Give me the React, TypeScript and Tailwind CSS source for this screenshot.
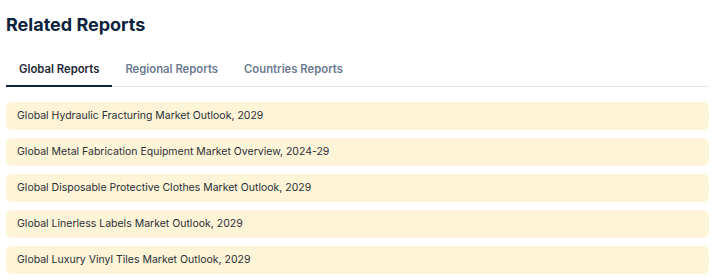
const tabs = ['Global Reports', 'Regional Reports', 'Countries Reports'];

const reports = [
  'Global Hydraulic Fracturing Market Outlook, 2029',
  'Global Metal Fabrication Equipment Market Overview, 2024-29',
  'Global Disposable Protective Clothes Market Outlook, 2029',
  'Global Linerless Labels Market Outlook, 2029',
  'Global Luxury Vinyl Tiles Market Outlook, 2029',
];

export default function App() {
  return (
    <div className="w-[720px] h-[280px] bg-white font-['Inter',sans-serif] overflow-hidden">
      <div className="w-[703px] ml-[6px] pt-[13px]">
        <h2 className="text-[18px] leading-[24px] font-bold text-[#0c2340]">Related Reports</h2>

        {/* Tabs */}
        <div className="flex mt-[17px] border-b border-[#e5e7eb]">
          {tabs.map((tab, i) => (
            <button
              key={tab}
              className={`px-[13px] pt-[7px] pb-[8px] text-[11.3px] leading-[16px] font-semibold -mb-px border-b-2 ${
                i === 0 ? 'text-[#1f2937] border-[#0c2340]' : 'text-[#6b7a90] border-transparent'
              }`}
            >
              {tab}
            </button>
          ))}
        </div>

        {/* Report list */}
        <div className="flex flex-col gap-[8px] mt-[15px]">
          {reports.map((r) => (
            <div key={r} className="h-[28px] flex items-center px-[11px] bg-[#fef4d7] rounded-[6px] text-[10.5px] text-[#2a2f36]">
              {r}
            </div>
          ))}
        </div>
      </div>
    </div>
  );
}
